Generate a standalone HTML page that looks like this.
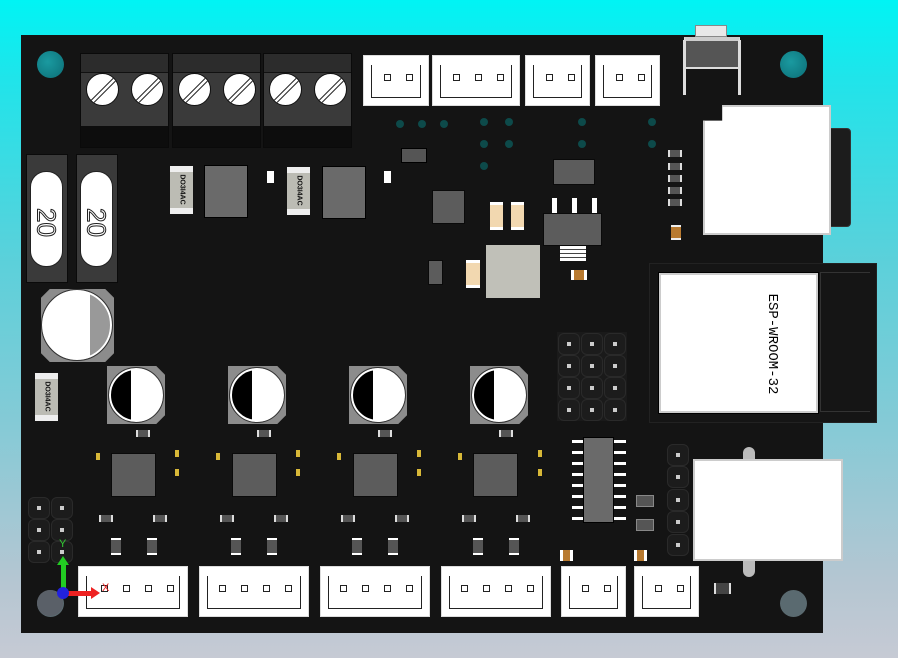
<!DOCTYPE html>
<html><head><meta charset="utf-8"><style>
*{margin:0;padding:0;box-sizing:border-box}
body{width:898px;height:658px;overflow:hidden;position:relative;font-family:"Liberation Sans",sans-serif;
background:linear-gradient(180deg,#00f4f4 0%,#20e4ea 12%,#5cd0da 40%,#86cad6 65%,#b4c6d2 88%,#c6cad4 100%)}
div{position:absolute}
.board{left:21px;top:35px;width:802px;height:598px;background:#141414}
.hole{width:27px;height:27px;border-radius:50%;background:radial-gradient(circle at 40% 40%,#1a9aa0,#0c6e76)}
.tb{width:89px;height:95px;top:53px;background:#3a3a3a;border:1px solid #0a0a0a}
.tb:before{content:"";position:absolute;left:0;right:0;top:0;height:18px;background:#2c2c2c;border-bottom:1px solid #111}
.tb:after{content:"";position:absolute;left:0;right:0;bottom:0;height:21px;background:#0d0d0d}
.screw{width:33px;height:33px;border-radius:50%;background:#fff;top:19px;overflow:hidden;border:1px solid #111}
.screw:before,.screw:after{content:"";position:absolute;width:40px;height:1px;background:#222;left:-4px;top:14px;transform:rotate(-45deg)}
.screw:after{top:19px}
.con{background:#fff;border:1px solid #ddd}
.con i{position:absolute;left:7px;right:7px;top:9px;bottom:7px;border:1px solid #222;border-top:none}
.con b{position:absolute;width:7px;height:7px;border:1px solid #222;top:18px}
.sq{background:#5c5c5c;border:1px solid #0a0a0a}
.y{background:#d8b838;width:4px;height:7px}
.sm{background:#555;border-left:2px solid #ddd;border-right:2px solid #ddd;width:14px;height:7px}
.via{width:8px;height:8px;border-radius:50%;background:#0d4a4a}
.fuse{width:42px;height:129px;background:#3a3a3a;border:1px solid #0a0a0a}
.fuse i{position:absolute;left:3px;top:16px;width:33px;height:96px;background:#fff;border-radius:16px;border:1px solid #222}
.fuse span{position:absolute;left:-6px;top:52px;width:50px;text-align:center;transform:rotate(90deg);font-size:26px;color:#fff;-webkit-text-stroke:1px #222;font-family:"Liberation Sans",sans-serif}
.cap{width:58px;height:58px;background:#8c8c8c;clip-path:polygon(0 0,85% 0,100% 15%,100% 85%,85% 100%,0 100%)}
.cap i{position:absolute;left:2px;top:2px;width:54px;height:54px;border-radius:50%;border:2px solid #fff;outline:1px solid #333;background:linear-gradient(90deg,#000 0,#000 40%,#fff 40%)}
.ind{background:#6a6a6a;border:1px solid #000}
.dio{width:23px;height:48px;background:#bcbcb4;border-top:6px solid #eee;border-bottom:6px solid #eee}
.dio span{position:absolute;left:-12px;top:14px;width:48px;text-align:center;transform:rotate(90deg);font-size:7px;font-weight:bold;color:#111;white-space:nowrap}
.pin{width:22px;height:22px;border-radius:6px;background:#1c1c1c;border:1px solid #2a2a2a}
.pin:after{content:"";position:absolute;left:8px;top:8px;width:4px;height:4px;background:#ccc}
</style></head><body>
<div class="board"></div>
<div class="hole" style="left:37px;top:51px"></div>
<div class="hole" style="left:780px;top:51px"></div>
<div class="hole" style="left:37px;top:590px;background:#5a6a70"></div>
<div class="hole" style="left:780px;top:590px;background:#5a6a70"></div>

<div class="tb" style="left:80px"><div class="screw" style="left:5px"></div><div class="screw" style="left:50px"></div></div>
<div class="tb" style="left:172px"><div class="screw" style="left:5px"></div><div class="screw" style="left:50px"></div></div>
<div class="tb" style="left:263px"><div class="screw" style="left:5px"></div><div class="screw" style="left:50px"></div></div>

<div class="con" style="left:363px;top:55px;width:66px;height:51px"><i></i><b style="left:20px"></b><b style="left:42px"></b></div>
<div class="con" style="left:432px;top:55px;width:88px;height:51px"><i></i><b style="left:20px"></b><b style="left:42px"></b><b style="left:64px"></b></div>
<div class="con" style="left:525px;top:55px;width:65px;height:51px"><i></i><b style="left:20px"></b><b style="left:42px"></b></div>
<div class="con" style="left:595px;top:55px;width:65px;height:51px"><i></i><b style="left:20px"></b><b style="left:42px"></b></div>

<div style="left:695px;top:25px;width:32px;height:12px;background:#e8e8e8;border:1px solid #888"></div>
<div style="left:684px;top:37px;width:56px;height:32px;background:#555;border:2px solid #ddd;border-top:4px solid #ccc"></div>
<div style="left:683px;top:40px;width:3px;height:55px;background:#ddd"></div>
<div style="left:738px;top:40px;width:3px;height:55px;background:#ddd"></div>

<div class="via" style="left:396px;top:120px"></div><div class="via" style="left:418px;top:120px"></div><div class="via" style="left:440px;top:120px"></div>
<div class="via" style="left:480px;top:118px"></div><div class="via" style="left:505px;top:118px"></div><div class="via" style="left:578px;top:118px"></div><div class="via" style="left:648px;top:118px"></div>
<div class="via" style="left:480px;top:140px"></div><div class="via" style="left:505px;top:140px"></div><div class="via" style="left:578px;top:140px"></div><div class="via" style="left:648px;top:140px"></div>
<div class="via" style="left:480px;top:162px"></div>

<div style="left:820px;top:128px;width:31px;height:99px;background:#1c1c1c;border-radius:4px;border:1px solid #333"></div>
<div style="left:703px;top:105px;width:128px;height:130px;background:#fff;border:2px solid #ccc;clip-path:polygon(0 12%,15% 12%,15% 0,100% 0,100% 100%,0 100%)"></div>
<div class="sm" style="left:668px;top:150px"></div><div class="sm" style="left:668px;top:163px"></div><div class="sm" style="left:668px;top:175px"></div><div class="sm" style="left:668px;top:187px"></div><div class="sm" style="left:668px;top:199px"></div>
<div style="left:671px;top:225px;width:10px;height:15px;background:#b87a30;border-top:2px solid #eee;border-bottom:2px solid #eee"></div>

<div class="fuse" style="left:26px;top:154px"><i></i><span>20</span></div>
<div class="fuse" style="left:76px;top:154px"><i></i><span>20</span></div>

<div class="dio" style="left:170px;top:166px"><span>DO3I4AC</span></div>
<div class="ind" style="left:204px;top:165px;width:44px;height:53px"></div>
<div class="dio" style="left:287px;top:167px"><span>DO3I4AC</span></div>
<div class="ind" style="left:322px;top:166px;width:44px;height:53px"></div>
<div style="left:267px;top:171px;width:7px;height:12px;background:#fff"></div>
<div style="left:384px;top:171px;width:7px;height:12px;background:#fff"></div>
<div style="left:401px;top:148px;width:26px;height:15px;background:#555;border:1px solid #000"></div>

<div class="sq" style="left:432px;top:190px;width:33px;height:34px"></div>
<div style="left:490px;top:202px;width:13px;height:28px;background:#f2d8b0;border-top:3px solid #fff;border-bottom:3px solid #fff"></div>
<div style="left:511px;top:202px;width:13px;height:28px;background:#f2d8b0;border-top:3px solid #fff;border-bottom:3px solid #fff"></div>
<div class="sq" style="left:553px;top:159px;width:42px;height:26px"></div>
<div style="left:552px;top:198px;width:5px;height:16px;background:#fff"></div><div style="left:572px;top:198px;width:5px;height:16px;background:#fff"></div><div style="left:592px;top:198px;width:5px;height:16px;background:#fff"></div>
<div class="sq" style="left:543px;top:213px;width:59px;height:33px"></div>
<div style="left:560px;top:246px;width:26px;height:15px;background:repeating-linear-gradient(#fff 0,#fff 3px,#444 3px,#444 4px)"></div>
<div style="left:486px;top:245px;width:54px;height:53px;background:#c0c0b8"></div>
<div style="left:466px;top:260px;width:14px;height:28px;background:#f2d8b0;border-top:3px solid #fff;border-bottom:3px solid #fff"></div>
<div style="left:571px;top:270px;width:16px;height:10px;background:#b87a30;border-left:3px solid #fff;border-right:3px solid #fff"></div>
<div class="sq" style="left:428px;top:260px;width:15px;height:25px"></div>

<div style="left:649px;top:263px;width:228px;height:160px;background:#151515;border:1px solid #222"></div>
<div style="left:820px;top:272px;width:50px;height:140px;border:1px solid #333;border-right:none"></div>
<div style="left:659px;top:273px;width:159px;height:140px;background:#fff;border:2px solid #ccc;outline:1px solid #000"></div>
<div style="left:717px;top:336px;width:110px;height:16px;transform:rotate(90deg);font-size:14px;line-height:16px;color:#000;text-align:center;white-space:nowrap;font-family:'Liberation Mono',monospace">ESP-WROOM-32</div>

<div style="left:41px;top:289px;width:73px;height:73px;background:#8c8c8c;clip-path:polygon(12% 0,88% 0,100% 12%,100% 88%,88% 100%,12% 100%,0 88%,0 12%)"></div>
<div style="left:42px;top:290px;width:70px;height:70px;border-radius:50%;border:2px solid #fff;outline:1px solid #333;background:linear-gradient(90deg,#fff 0,#fff 70%,#999 70%)"></div>
<div class="dio" style="left:35px;top:373px"><span>DO3I4AC</span></div>

<div class="cap" style="left:107px;top:366px"><i></i></div>
<div class="cap" style="left:228px;top:366px"><i></i></div>
<div class="cap" style="left:349px;top:366px"><i></i></div>
<div class="cap" style="left:470px;top:366px"><i></i></div>
<div class="sq" style="left:111px;top:453px;width:45px;height:44px"></div>
<div class="sq" style="left:232px;top:453px;width:45px;height:44px"></div>
<div class="sq" style="left:353px;top:453px;width:45px;height:44px"></div>
<div class="sq" style="left:473px;top:453px;width:45px;height:44px"></div>
<div class="y" style="left:96px;top:453px"></div><div class="y" style="left:175px;top:450px"></div><div class="y" style="left:175px;top:469px"></div>
<div class="y" style="left:216px;top:453px"></div><div class="y" style="left:296px;top:450px"></div><div class="y" style="left:296px;top:469px"></div>
<div class="y" style="left:337px;top:453px"></div><div class="y" style="left:417px;top:450px"></div><div class="y" style="left:417px;top:469px"></div>
<div class="y" style="left:458px;top:453px"></div><div class="y" style="left:538px;top:450px"></div><div class="y" style="left:538px;top:469px"></div>
<div class="sm" style="left:99px;top:515px"></div><div class="sm" style="left:153px;top:515px"></div>
<div class="sm" style="left:220px;top:515px"></div><div class="sm" style="left:274px;top:515px"></div>
<div class="sm" style="left:341px;top:515px"></div><div class="sm" style="left:395px;top:515px"></div>
<div class="sm" style="left:462px;top:515px"></div><div class="sm" style="left:516px;top:515px"></div>
<div class="sm" style="left:136px;top:430px"></div><div class="sm" style="left:257px;top:430px"></div><div class="sm" style="left:378px;top:430px"></div><div class="sm" style="left:499px;top:430px"></div>
<div style="left:111px;top:538px;width:10px;height:17px;background:#555;border-top:2px solid #fff;border-bottom:2px solid #fff"></div>
<div style="left:147px;top:538px;width:10px;height:17px;background:#555;border-top:2px solid #fff;border-bottom:2px solid #fff"></div>
<div style="left:231px;top:538px;width:10px;height:17px;background:#555;border-top:2px solid #fff;border-bottom:2px solid #fff"></div>
<div style="left:267px;top:538px;width:10px;height:17px;background:#555;border-top:2px solid #fff;border-bottom:2px solid #fff"></div>
<div style="left:352px;top:538px;width:10px;height:17px;background:#555;border-top:2px solid #fff;border-bottom:2px solid #fff"></div>
<div style="left:388px;top:538px;width:10px;height:17px;background:#555;border-top:2px solid #fff;border-bottom:2px solid #fff"></div>
<div style="left:473px;top:538px;width:10px;height:17px;background:#555;border-top:2px solid #fff;border-bottom:2px solid #fff"></div>
<div style="left:509px;top:538px;width:10px;height:17px;background:#555;border-top:2px solid #fff;border-bottom:2px solid #fff"></div>

<div style="left:557px;top:332px;width:70px;height:89px;background:#1a1a1a"></div>
<div class="pin" style="left:558px;top:333px"></div><div class="pin" style="left:581px;top:333px"></div><div class="pin" style="left:604px;top:333px"></div>
<div class="pin" style="left:558px;top:355px"></div><div class="pin" style="left:581px;top:355px"></div><div class="pin" style="left:604px;top:355px"></div>
<div class="pin" style="left:558px;top:377px"></div><div class="pin" style="left:581px;top:377px"></div><div class="pin" style="left:604px;top:377px"></div>
<div class="pin" style="left:558px;top:399px"></div><div class="pin" style="left:581px;top:399px"></div><div class="pin" style="left:604px;top:399px"></div>
<div class="pin" style="left:28px;top:497px"></div><div class="pin" style="left:51px;top:497px"></div>
<div class="pin" style="left:28px;top:519px"></div><div class="pin" style="left:51px;top:519px"></div>
<div class="pin" style="left:28px;top:541px"></div><div class="pin" style="left:51px;top:541px"></div>
<div class="pin" style="left:667px;top:444px"></div><div class="pin" style="left:667px;top:466px"></div><div class="pin" style="left:667px;top:489px"></div><div class="pin" style="left:667px;top:511px"></div><div class="pin" style="left:667px;top:534px"></div>

<div style="left:572px;top:436px;width:54px;height:88px;background:repeating-linear-gradient(#fff 0,#fff 3px,transparent 3px,transparent 11px);background-size:100% 11px;background-position:0 4px"></div>
<div style="left:583px;top:437px;width:31px;height:86px;background:#6a6a6a;border:1px solid #000"></div>
<div style="left:636px;top:495px;width:18px;height:12px;background:#555;border:1px solid #888"></div>
<div style="left:636px;top:519px;width:18px;height:12px;background:#555;border:1px solid #888"></div>
<div style="left:560px;top:550px;width:13px;height:11px;background:#b87a30;border-left:3px solid #fff;border-right:3px solid #fff"></div>
<div style="left:634px;top:550px;width:13px;height:11px;background:#b87a30;border-left:3px solid #fff;border-right:3px solid #fff"></div>

<div style="left:743px;top:447px;width:12px;height:130px;background:#bbb;border-radius:6px"></div>
<div style="left:693px;top:459px;width:150px;height:102px;background:#fff;border:2px solid #ccc"></div>
<div style="left:714px;top:583px;width:17px;height:11px;background:#444;border-left:2px solid #ddd;border-right:2px solid #ddd"></div>

<div class="con" style="left:78px;top:566px;width:110px;height:51px"><i></i><b style="left:22px"></b><b style="left:44px"></b><b style="left:66px"></b><b style="left:88px"></b></div>
<div class="con" style="left:199px;top:566px;width:110px;height:51px"><i></i><b style="left:19px"></b><b style="left:41px"></b><b style="left:63px"></b><b style="left:85px"></b></div>
<div class="con" style="left:320px;top:566px;width:110px;height:51px"><i></i><b style="left:19px"></b><b style="left:41px"></b><b style="left:63px"></b><b style="left:85px"></b></div>
<div class="con" style="left:441px;top:566px;width:110px;height:51px"><i></i><b style="left:19px"></b><b style="left:41px"></b><b style="left:63px"></b><b style="left:85px"></b></div>
<div class="con" style="left:561px;top:566px;width:65px;height:51px"><i></i><b style="left:20px"></b><b style="left:42px"></b></div>
<div class="con" style="left:634px;top:566px;width:65px;height:51px"><i></i><b style="left:20px"></b><b style="left:42px"></b></div>

<div style="left:37px;top:590px;width:26px;height:26px;border-radius:50%;background:#5a6068"></div>
<div style="left:61px;top:562px;width:5px;height:28px;background:#2c2"></div>
<div style="left:57px;top:556px;width:0;height:0;border-left:6px solid transparent;border-right:6px solid transparent;border-bottom:9px solid #2c2"></div>
<div style="left:64px;top:591px;width:28px;height:5px;background:#e22"></div>
<div style="left:91px;top:587px;width:0;height:0;border-top:6px solid transparent;border-bottom:6px solid transparent;border-left:9px solid #e22"></div>
<div style="left:57px;top:587px;width:12px;height:12px;border-radius:50%;background:#22d"></div>
<div style="left:59px;top:538px;font-size:11px;color:#3c3">Y</div>
<div style="left:102px;top:582px;font-size:11px;color:#e22">X</div>
</body></html>
